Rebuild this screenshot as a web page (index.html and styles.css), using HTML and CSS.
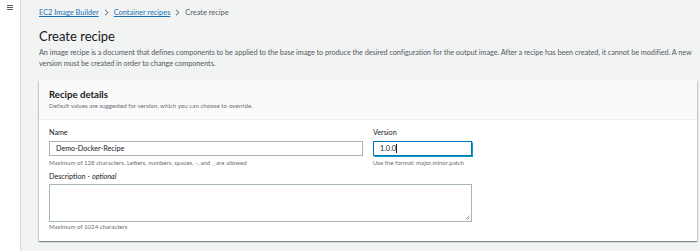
FILE: index.html
```html
<!DOCTYPE html>
<html>
<head>
<meta charset="utf-8">
<link rel="stylesheet" href="styles.css">
</head>
<body>
<div class="app">
  <aside class="sidebar">
    <svg class="menu" width="6" height="5" viewBox="0 0 6 5"><rect x="0" y="0" width="6" height="1" fill="#545b64"/><rect x="0" y="2" width="6" height="1" fill="#545b64"/><rect x="0" y="4" width="6" height="1" fill="#545b64"/></svg>
  </aside>
  <main class="main">
    <nav class="crumbs">
      <a class="crumb-link">EC2 Image Builder</a>
      <svg class="sep" width="5" height="7" viewBox="0 0 5 7"><path d="M1 0.8 L4 3.5 L1 6.2" fill="none" stroke="#545b64" stroke-width="1"/></svg>
      <a class="crumb-link">Container recipes</a>
      <svg class="sep" width="5" height="7" viewBox="0 0 5 7"><path d="M1 0.8 L4 3.5 L1 6.2" fill="none" stroke="#545b64" stroke-width="1"/></svg>
      <span class="crumb-current">Create recipe</span>
    </nav>
    <h1 class="title">Create recipe</h1>
    <p class="intro">An image recipe is a document that defines components to be applied to the base image to produce the desired configuration for the output image. After a recipe has been created, it cannot be modified. A new version must be created in order to change components.</p>
    <section class="card">
      <header class="card-head">
        <h2 class="card-title">Recipe details</h2>
        <p class="card-sub">Default values are suggested for version, which you can choose to override.</p>
      </header>
      <div class="card-body">
        <div class="row">
          <div class="field field-name">
            <label class="label">Name</label>
            <div class="input">Demo-Docker-Recipe</div>
            <div class="hint">Maximum of 128 characters. Letters, numbers, spaces, -, and _ are allowed</div>
          </div>
          <div class="field field-version">
            <label class="label">Version</label>
            <div class="input input-focus">1.0.0<span class="caret"></span></div>
            <div class="hint">Use the format: major.minor.patch</div>
          </div>
        </div>
        <div class="field field-desc">
          <label class="label">Description - <i>optional</i></label>
          <div class="textarea"><svg class="grip" width="5" height="5" viewBox="0 0 5 5"><path d="M4.5 0.5 L0.5 4.5 M4.5 2.5 L2.5 4.5" stroke="#888" stroke-width="0.8"/></svg></div>
          <div class="hint">Maximum of 1024 characters</div>
        </div>
      </div>
    </section>
  </main>
</div>
</body>
</html>
```
FILE: styles.css
```css
* { box-sizing: border-box; }
html, body { margin: 0; padding: 0; }
body {
  width: 700px;
  height: 251px;
  overflow: hidden;
  background: #f2f3f3;
  font-family: "Lato", "Open Sans", sans-serif;
  color: #16191f;
}
.app { display: flex; height: 251px; }
.sidebar {
  width: 21px;
  flex: none;
  background: #fff;
  border-right: 1px solid #d5dbdb;
  padding: 5px 0 0 7px;
}
.menu { display: block; }
.main { flex: 1; padding: 6px 2px 0 18px; }
.crumbs {
  display: flex;
  align-items: center;
  font-size: 7.4px;
  height: 13px;
  gap: 5px;
}
.crumb-link { color: #1a73b8; text-decoration: underline; }
.sep { display: block; }
.crumb-current { color: #545b64; }
.title {
  margin: 8px 0 0;
  font-size: 13px;
  font-weight: 400;
  line-height: 18px;
}
.intro {
  margin: 1.5px 0 0;
  font-size: 7.3px;
  letter-spacing: -0.06px;
  line-height: 11px;
  color: #545b64;
}
.card {
  margin-top: 11.5px;
  margin-right: 1px;
  background: #fff;
  box-shadow: 0 1px 1px 0 rgba(0,28,36,0.3), 1px 1px 1px 0 rgba(0,28,36,0.15), -1px 1px 1px 0 rgba(0,28,36,0.15);
}
.card-head {
  background: #fafafa;
  border-bottom: 1px solid #eaeded;
  padding: 9px 10px 0;
  height: 40px;
}
.card-title { margin: 0; font-size: 9.6px; font-weight: 700; line-height: 12px; }
.card-sub { margin: 0; font-size: 6.2px; color: #687078; line-height: 9px; }
.card-body { padding: 8px 10px 10px; }
.row { display: flex; gap: 10px; }
.field { display: flex; flex-direction: column; }
.field-name { width: 314px; }
.field-version { width: 99px; }
.field-desc { width: 423px; margin-top: 5px; }
.label { font-size: 7.2px; line-height: 10px; color: #16191f; margin-bottom: 3px; }
.label i { color: #16191f; }
.field-desc .label { margin-bottom: 2px; }
.input {
  height: 15px;
  border: 1px solid #aab7b8;
  font-size: 7.2px;
  line-height: 13px;
  padding: 0 6px;
  background: #fff;
}
.input-focus { border: 1px solid #0073bb; box-shadow: 0 0 1px 0.5px #00a1c9; }
.caret { display: inline-block; width: 0.7px; height: 9px; background: #16191f; vertical-align: -2px; }
.hint { font-size: 6.1px; line-height: 8px; color: #687078; margin-top: 3px; }
.field-desc .hint { margin-top: 1px; }
.textarea {
  height: 38px;
  border: 1px solid #aab7b8;
  background: #fff;
  position: relative;
}
.grip { position: absolute; right: 1px; bottom: 1px; }
```
